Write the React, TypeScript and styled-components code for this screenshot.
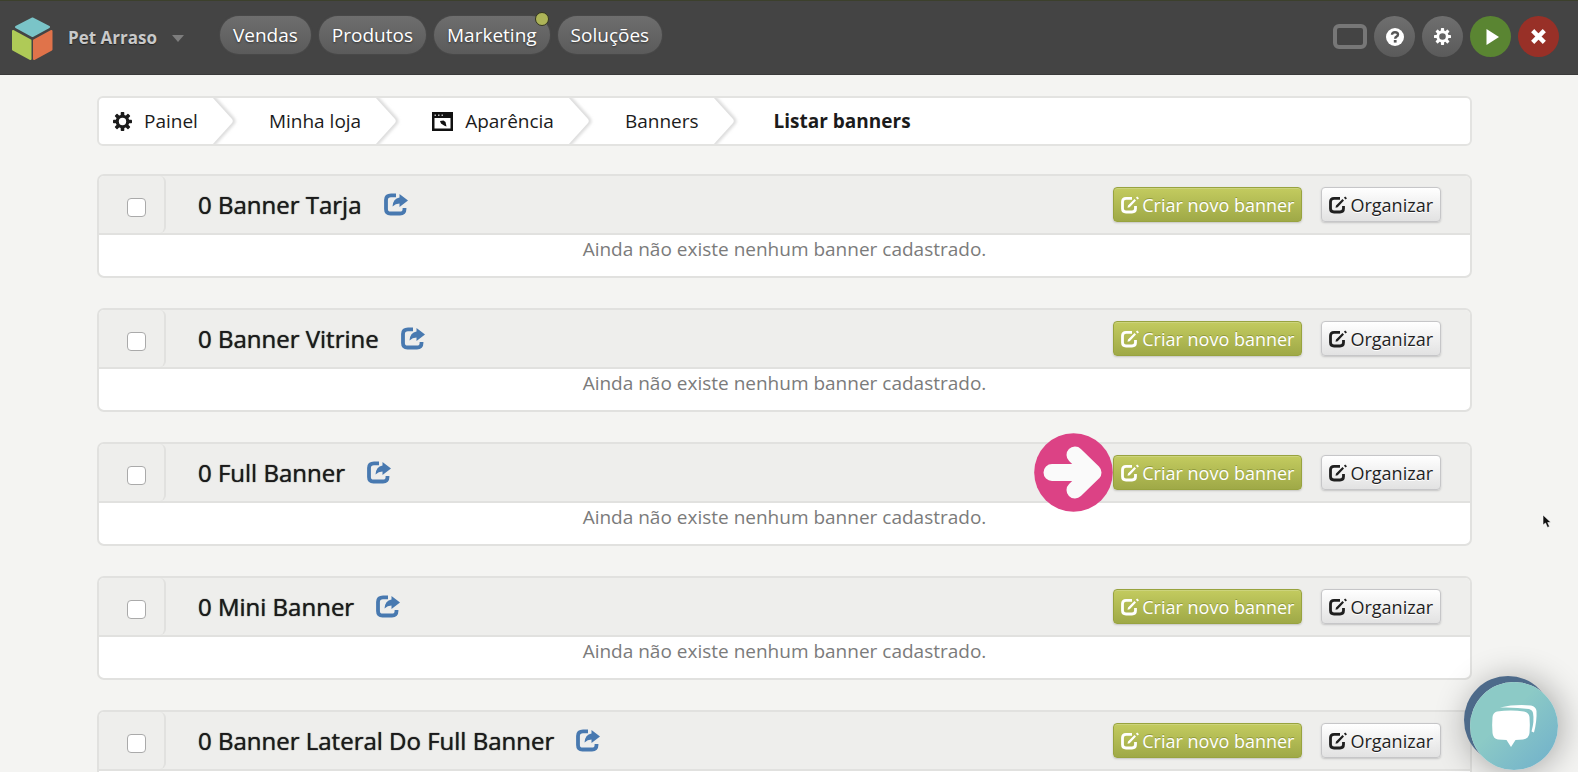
import React from "react";
import styled, { createGlobalStyle, css } from "styled-components";

const GlobalStyle = createGlobalStyle`
  *, *::before, *::after { box-sizing: border-box; }
  body {
    margin: 0;
    background: #f4f4f2;
    color: #1b1b1b;
    font-family: "Open Sans", "Noto Sans", sans-serif;
    font-size: 19px;
    overflow: hidden;
  }
  button { font: inherit; cursor: pointer; }
  a { color: inherit; text-decoration: none; }
`;

const TopBar = styled.header`
  display: flex;
  align-items: flex-start;
  height: 75px;
  padding: 15px 19px 0 12px;
  background: #444;
  border-top: 1px solid #3c402c;
  border-bottom: 1px solid #3a3a3a;
`;

const StoreButton = styled.button`
  display: flex;
  align-items: center;
  height: 44px;
  padding: 0;
  border: 0;
  background: none;
  color: #c9c9c9;
  font-size: 17px;
  font-weight: 700;
  line-height: 24px;
  text-shadow: 0 1px 1px #222;
`;

const StoreName = styled.span`
  margin: 0 15px 0 15px;
`;

const Nav = styled.nav`
  display: flex;
  gap: 8px;
  margin-left: 36px;
`;

const NavPill = styled.a`
  position: relative;
  height: 38px;
  padding: 0 13px;
  border-radius: 19px;
  background: linear-gradient(#6e6e6e, #5b5b5b);
  box-shadow: 0 0 2px #555;
  color: #fff;
  line-height: 38px;
  text-shadow: 0 1px 2px #333;
`;

const Dot = styled.span`
  position: absolute;
  top: -4px;
  right: 1px;
  width: 14px;
  height: 14px;
  border: 1px solid #33351f;
  border-radius: 50%;
  background: #adb458;
`;

const Tools = styled.div`
  display: flex;
  align-items: center;
  gap: 7px;
  margin-left: auto;
`;

const ScreenToggle = styled.button`
  width: 34px;
  height: 25px;
  padding: 0;
  border: 4px solid #777;
  border-radius: 6px;
  background: none;
`;

const toolColors = {
  gray: "linear-gradient(#6f6f6f, #5a5a5a)",
  green: "#5a8532",
  red: "#983027",
};

const ToolButton = styled.button<{ $tone: keyof typeof toolColors }>`
  display: grid;
  place-items: center;
  width: 41px;
  height: 41px;
  padding: 0;
  border: 0;
  border-radius: 50%;
  background: ${(p) => toolColors[p.$tone]};
  color: #fff;
`;

const Main = styled.main`
  padding: 21px 106px 0 97px;
`;

const Breadcrumb = styled.nav`
  display: flex;
  height: 50px;
  margin-bottom: 28px;
  border: 2px solid #e3e3e1;
  border-radius: 6px;
  background: #fff;
  overflow: hidden;
`;

const Crumb = styled.a<{ $first?: boolean }>`
  display: flex;
  align-items: center;
  gap: 12px;
  padding-left: ${(p) => (p.$first ? 14 : 34)}px;
`;

const CurrentCrumb = styled.span`
  display: flex;
  align-items: center;
  padding-left: 38px;
  font-weight: 700;
`;

const ChevronSvg = styled.svg`
  display: block;
  flex: none;
  margin-left: 13px;
`;

const Card = styled.section`
  margin-bottom: 30px;
  border: 2px solid #e1e1df;
  border-radius: 7px;
  background: #fff;
`;

const CardHeader = styled.header`
  display: flex;
  align-items: center;
  height: 59px;
  padding-right: 29px;
  border-bottom: 2px solid #e1e1df;
  border-radius: 5px 5px 0 0;
  background: #eeeeec;
`;

const CheckCell = styled.label`
  display: grid;
  place-items: center;
  align-self: stretch;
  width: 67px;
  padding: 5px 0 0 10px;
  border-right: 2px solid #e1e1df;
  border-radius: 0 6px 6px 0;
`;

const Check = styled.input`
  appearance: none;
  width: 19px;
  height: 19px;
  margin: 0;
  border: 1px solid #aaa;
  border-radius: 4px;
  background: #fff;
  &:checked { background: #4778ad; }
`;

const Title = styled.h2`
  margin: 0 22px 0 32px;
  font-size: 24px;
  font-weight: 500;
  line-height: 32px;
  text-shadow: 0 0 1px #1b1b1b;
`;

const ShareLink = styled.a`
  color: #4879b0;
  line-height: 0;
`;

const Actions = styled.div`
  display: flex;
  gap: 19px;
  margin-left: auto;
`;

const ActionButton = styled.button<{ $primary?: boolean }>`
  display: flex;
  align-items: center;
  gap: 3px;
  height: 35px;
  padding: 0 7px;
  border-radius: 4px;
  font-size: 18px;
  line-height: 24px;
  ${(p) =>
    p.$primary
      ? css`
          border: 1px solid #98a33f;
          background: linear-gradient(#c3cb5f, #9fa947);
          box-shadow: inset 0 1px 0 #ccd37c, 0 1px 2px #c4c4c0;
          color: #fff;
          text-shadow: 0 -1px 0 #919b3e;
        `
      : css`
          border: 1px solid #c6c6c8;
          background: linear-gradient(#fff, #e2e2e2);
          box-shadow: 0 1px 2px #c4c4c4;
          color: #1f1f1f;
          text-shadow: 0 1px 0 #fff;
        `}
`;

const CardBody = styled.div`
  height: 41px;
`;

const Empty = styled.p`
  margin: 0;
  color: #7b7b7b;
  line-height: 28px;
  text-align: center;
`;

const Pointer = styled.svg`
  position: absolute;
  top: 433px;
  left: calc(100% - 544px);
`;

const Cursor = styled.svg`
  position: absolute;
  top: 514px;
  left: calc(100% - 36px);
`;

const ChatButton = styled.button`
  position: fixed;
  right: 20px;
  bottom: 2px;
  display: grid;
  place-items: center;
  width: 88px;
  height: 88px;
  padding: 0;
  border: 0;
  border-radius: 50%;
  background: linear-gradient(135deg, #8ccac6 40%, #6fafcb);
  box-shadow: -6px -6px 0 #4d6a8a, 0 0 32px 4px rgba(0, 0, 0, 0.3);
`;

const Page = styled.div`
  position: relative;
  height: 100vh;
  overflow: hidden;
`;

const Logo = () => (
  <svg width="41" height="43" viewBox="0 0 41 43" aria-hidden="true">
    <g strokeWidth="2" strokeLinejoin="round">
      <path d="M20.500 1.500 37 10 20.500 19 4 10Z" fill="#7ac4c8" stroke="#7ac4c8" />
      <path d="M1 14 18.500 23.500V42L1 32.500Z" fill="#afca57" stroke="#afca57" />
      <path d="M39.500 14 22 23.500V42L39.500 32.500Z" fill="#e0734a" stroke="#e0734a" />
    </g>
  </svg>
);

const Gear = ({ size }: { size: number }) => (
  <svg width={size} height={size} viewBox="0 0 18 18" aria-hidden="true">
    <g fill="currentColor">
      {[0, 45, 90, 135, 180, 225, 270, 315].map((a) => (
        <rect key={a} x="7.300" y="0" width="3.400" height="4" rx="0.700" transform={`rotate(${a} 9 9)`} />
      ))}
    </g>
    <circle cx="9" cy="9" r="5" fill="none" stroke="currentColor" strokeWidth="3" />
  </svg>
);

const Window = () => (
  <svg width="21" height="19" viewBox="0 0 21 19" aria-hidden="true">
    <path d="M0 0H21V19H0Z" fill="#111" />
    <path d="M2.500 6H18.500V16.500H2.500Z" fill="#fff" />
    <path d="M2.500 2.500h1.500v1.500h-1.500zM6 2.500h1.500v1.500H6zM9.500 2.500H11v1.500H9.500z" fill="#bbb" />
    <path d="M8 9 11.500 8.500 13.500 10 14.500 14.500 12.500 13.800 9 11.500Z" fill="#111" />
  </svg>
);

const Chevron = () => (
  <ChevronSvg width="24" height="46" viewBox="0 0 24 46" overflow="visible" aria-hidden="true">
    <defs>
      <filter id="soft" x="-50%" y="-20%" width="200%" height="140%">
        <feGaussianBlur stdDeviation="1.800" />
      </filter>
    </defs>
    <path d="M1 -1 21 21Q23 23 21 25L1 47" fill="none" stroke="#dcdcdc" strokeWidth="5" filter="url(#soft)" />
    <path d="M-8 -1H1L21 21Q22.500 23 21 25L1 47H-8Z" fill="#fff" />
  </ChevronSvg>
);

const ShareIcon = () => (
  <svg width="24" height="23" viewBox="0 0 24 23" aria-hidden="true">
    <path d="M12 2.300H7Q2 2.300 2 7V16Q2 20.500 6.500 20.500H16Q20.500 20.500 20.500 16V15" fill="none" stroke="currentColor" strokeWidth="3.800" />
    <path d="M15.500 1 24 7.500 15.500 14V10.500Q11.500 10.500 8.500 13.500 9 5.500 15.500 4.500Z" fill="currentColor" />
  </svg>
);

const EditIcon = () => (
  <svg width="18" height="18" viewBox="0 0 18 18" aria-hidden="true">
    <path d="M11 2.300H5Q1.500 2.300 1.500 5.800V12.500Q1.500 16 5 16H11Q14.500 16 14.500 12.500V10" fill="none" stroke="currentColor" strokeWidth="2.800" />
    <path d="M6.500 11.800 7 9.500 13.500 3 15 4.600 8.700 11.200ZM14.900 1.700 16.200 .4 18 2.200 16.600 3.500Z" fill="currentColor" />
  </svg>
);

const crumbs = [
  { label: "Painel", icon: <Gear size={19} /> },
  { label: "Minha loja" },
  { label: "Aparência", icon: <Window /> },
  { label: "Banners" },
];

const emptyText = "Ainda não existe nenhum banner cadastrado.";

const cards = [
  { title: "0 Banner Tarja", message: emptyText },
  { title: "0 Banner Vitrine", message: emptyText },
  { title: "0 Full Banner", message: emptyText },
  { title: "0 Mini Banner", message: emptyText },
  { title: "0 Banner Lateral Do Full Banner" },
];

const BannerCard = ({ title, message }: { title: string; message?: string }) => (
  <Card>
    <CardHeader>
      <CheckCell>
        <Check type="checkbox" aria-label={title} />
      </CheckCell>
      <Title>{title}</Title>
      <ShareLink href="#" aria-label="Abrir">
        <ShareIcon />
      </ShareLink>
      <Actions>
        <ActionButton $primary>
          <EditIcon />
          Criar novo banner
        </ActionButton>
        <ActionButton>
          <EditIcon />
          Organizar
        </ActionButton>
      </Actions>
    </CardHeader>
    <CardBody>{message && <Empty>{message}</Empty>}</CardBody>
  </Card>
);

export default function App() {
  return (
    <Page>
      <GlobalStyle />
      <TopBar>
        <StoreButton>
          <Logo />
          <StoreName>Pet Arraso</StoreName>
          <svg width="12" height="7" viewBox="0 0 12 7" aria-hidden="true">
            <path d="M0 0H12L6 7Z" fill="#7d7d7d" />
          </svg>
        </StoreButton>
        <Nav>
          <NavPill href="#">Vendas</NavPill>
          <NavPill href="#">Produtos</NavPill>
          <NavPill href="#">
            Marketing
            <Dot />
          </NavPill>
          <NavPill href="#">Soluções</NavPill>
        </Nav>
        <Tools>
          <ScreenToggle aria-label="Tela" />
          <ToolButton $tone="gray" aria-label="Ajuda">
            <svg width="18" height="18" viewBox="0 0 18 18" aria-hidden="true">
              <circle cx="9" cy="9" r="9" fill="#fff" />
              <path d="M6 6.800Q6 4.200 9 4.200T12 6.600Q12 8 10.500 8.700 9.200 9.300 9.200 10.800" fill="none" stroke="#555" strokeWidth="2.400" />
              <path d="M7.800 12H10.600V14.600H7.800Z" fill="#555" />
            </svg>
          </ToolButton>
          <ToolButton $tone="gray" aria-label="Configurações">
            <Gear size={17} />
          </ToolButton>
          <ToolButton $tone="green" aria-label="Ver loja">
            <svg width="18" height="16" viewBox="0 0 18 16" aria-hidden="true">
              <path d="M4.500 0 17 8 4.500 16Z" fill="#fff" />
            </svg>
          </ToolButton>
          <ToolButton $tone="red" aria-label="Sair">
            <svg width="15" height="15" viewBox="0 0 16 16" aria-hidden="true">
              <path d="M3.500 3.500 12.500 12.500M12.500 3.500 3.500 12.500" stroke="#fff" strokeWidth="4.800" strokeLinecap="square" />
            </svg>
          </ToolButton>
        </Tools>
      </TopBar>
      <Main>
        <Breadcrumb>
          {crumbs.map((c, i) => (
            <React.Fragment key={c.label}>
              <Crumb href="#" $first={i === 0}>
                {c.icon}
                {c.label}
              </Crumb>
              <Chevron />
            </React.Fragment>
          ))}
          <CurrentCrumb>Listar banners</CurrentCrumb>
        </Breadcrumb>
        {cards.map((card) => (
          <BannerCard key={card.title} {...card} />
        ))}
      </Main>
      <Pointer width="79" height="79" viewBox="0 0 79 79" aria-hidden="true">
        <circle cx="39.500" cy="39.500" r="39.300" fill="#dc4285" />
        <path d="M18 39.500H48M41 22 59 39.500 41 57" fill="none" stroke="#fafafa" strokeWidth="17" strokeLinecap="round" strokeLinejoin="round" />
      </Pointer>
      <Cursor width="10" height="15" viewBox="0 0 10 15" aria-hidden="true">
        <path d="M1 1V11L3.500 9 5.500 13.500 7.500 12.500 5.700 8.500H9Z" fill="#111" stroke="#fff" strokeWidth="0.600" />
      </Cursor>
      <ChatButton aria-label="Chat">
        <svg width="46" height="44" viewBox="0 0 46 44" aria-hidden="true">
          <path d="M6 7.500Q20 5.500 33 7.500 38 8.500 38.500 13 39.200 21 38.500 29 38 34.500 32 35.500L24.500 36 20 43 15.500 36 7 35.500Q2 34.500 1.500 29 .8 21 1.500 13 2 8.500 6 7.500Z" fill="#fff" />
          <path d="M9 3.500Q24 0 40 1.500 45 2.500 45.500 7 46 17 43 28.500L40.500 27.500Q43.500 17 42 9 41.500 6 38 5 24 3 9 3.500Z" fill="#fff" />
        </svg>
      </ChatButton>
    </Page>
  );
}
